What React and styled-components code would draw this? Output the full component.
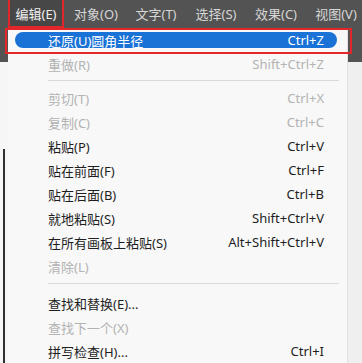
import React from "react";
import styled, { createGlobalStyle } from "styled-components";

const GlobalStyle = createGlobalStyle`
  html, body {
    margin: 0;
    padding: 0;
    background: #f2f2f2;
  }
  body {
    font-family: "Noto Sans", "Noto Sans CJK SC", sans-serif;
  }
`;

const Screen = styled.div`
  width: 362px;
  height: 363px;
  overflow: hidden;
  display: flex;
  flex-direction: column;
`;

const MenuBar = styled.div`
  height: 28px;
  flex: none;
  display: flex;
  align-items: stretch;
  background: #535353;
  padding-left: 8px;
  gap: 4px;
`;

const BarItem = styled.div`
  display: flex;
  align-items: center;
  justify-content: center;
  width: 56px;
  flex: none;
  box-sizing: border-box;
  font-size: 13px;
  color: ${(p) => (p.$open ? "#f2f2f2" : "#d6d6d6")};
  border: 2px solid ${(p) => (p.$open ? "#e3262a" : "transparent")};
  border-top: none;
  background: ${(p) => (p.$open ? "#474747" : "transparent")};
`;

const Body = styled.div`
  flex: 1;
  display: flex;
`;

const Gutter = styled.div`
  width: ${(p) => p.$w}px;
  flex: none;
  display: flex;
  flex-direction: column;
  background: ${(p) => p.$bg};
  border-left: ${(p) => (p.$edge ? "1px solid #e2e2e2" : "none")};
`;

const Cap = styled.div`
  height: 34px;
  flex: none;
  background: #535353;
`;

const Rail = styled.div`
  flex: 1;
  width: 2px;
  margin: 87px 0 0 3px;
  background: #2e2e2e;
`;

const Menu = styled.div`
  flex: 1;
  background: #f8f8f8;
  display: flex;
  flex-direction: column;
`;

const Item = styled.div`
  position: relative;
  height: 24px;
  flex: none;
  display: flex;
  align-items: center;
  justify-content: space-between;
  padding: 0 23px 0 40px;
  font-size: 13px;
  color: ${(p) => (p.$disabled ? "#b3b3b3" : "#1e1e1e")};

  ${(p) =>
    p.$active &&
    `
    color: #ffffff;
    &::before {
      content: "";
      position: absolute;
      left: 7px;
      right: 10px;
      top: 4px;
      bottom: 4px;
      border-radius: 8px;
      background: #1a71d6;
    }
    &::after {
      content: "";
      position: absolute;
      left: -3px;
      right: -5px;
      top: 0;
      bottom: -2px;
      border: 2px solid #e3262a;
    }
  `}
`;

const Label = styled.span`
  position: relative;
  z-index: 1;
  white-space: nowrap;
`;

const Separator = styled.div`
  flex: none;
  height: 1px;
  background: #dadada;
  margin: ${(p) => p.$m};
  margin-left: 40px;
  margin-right: 8px;
`;

const items = [
  { label: "还原(U)圆角半径", key: "Ctrl+Z", active: true },
  { label: "重做(R)", key: "Shift+Ctrl+Z", disabled: true },
  { sep: "4px 0 5px" },
  { label: "剪切(T)", key: "Ctrl+X", disabled: true },
  { label: "复制(C)", key: "Ctrl+C", disabled: true },
  { label: "粘贴(P)", key: "Ctrl+V" },
  { label: "贴在前面(F)", key: "Ctrl+F" },
  { label: "贴在后面(B)", key: "Ctrl+B" },
  { label: "就地粘贴(S)", key: "Shift+Ctrl+V" },
  { label: "在所有画板上粘贴(S)", key: "Alt+Shift+Ctrl+V" },
  { label: "清除(L)", disabled: true },
  { sep: "5px 0 7px" },
  { label: "查找和替换(E)..." },
  { label: "查找下一个(X)", disabled: true },
  { label: "拼写检查(H)...", key: "Ctrl+I" },
];

const barItems = ["编辑(E)", "对象(O)", "文字(T)", "选择(S)", "效果(C)", "视图(V)"];

export default function App() {
  return (
    <Screen>
      <GlobalStyle />
      <MenuBar>
        {barItems.map((t, i) => (
          <BarItem key={t} $open={i === 0}>
            {t}
          </BarItem>
        ))}
      </MenuBar>
      <Body>
        <Gutter $w={8} $bg="#f6f6f6">
          <Cap />
          <Rail />
        </Gutter>
        <Menu>
          {items.map((it, i) =>
            it.sep ? (
              <Separator key={i} $m={it.sep} />
            ) : (
              <Item key={i} $active={it.active} $disabled={it.disabled}>
                <Label>{it.label}</Label>
                {it.key && <Label>{it.key}</Label>}
              </Item>
            )
          )}
        </Menu>
        <Gutter $w={14} $bg="#efefef" $edge>
          <Cap />
        </Gutter>
      </Body>
    </Screen>
  );
}
